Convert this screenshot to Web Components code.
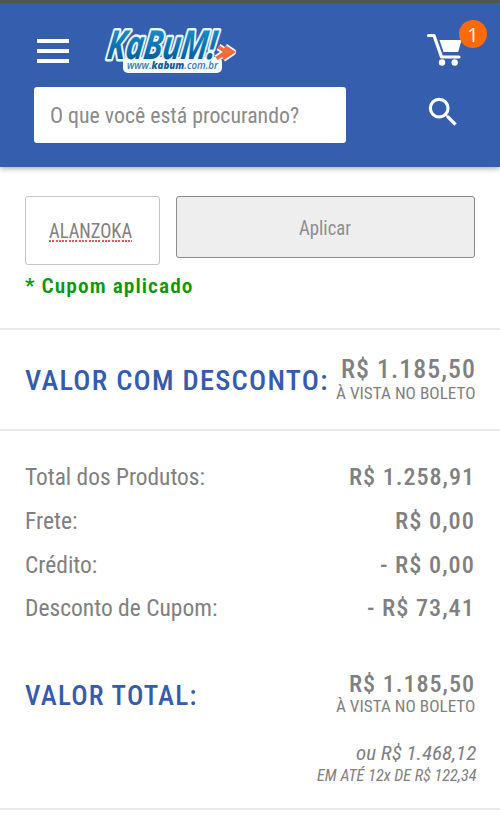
<!DOCTYPE html>
<html lang="pt-BR">
<head>
<meta charset="utf-8">
<title>KaBuM! - Carrinho</title>
<style>
html,body{margin:0;padding:0;background:#fff}
body{width:500px;height:830px;overflow:hidden;font-family:"Roboto Condensed",Roboto,sans-serif;font-stretch:condensed;color:#808080}
</style>
</head>
<body>
<cart-page></cart-page>
<script>
/* One line of text, condensed to the width given in "w". */
class FitText extends HTMLElement{
  connectedCallback(){
    const g=(n,d)=>this.getAttribute(n)||d;
    const ls=parseFloat(g('ls','0'));
    const r=this.attachShadow({mode:'open'});
    r.innerHTML=`<style>
      :host{display:block;flex:none;width:${g('w')}px;height:${g('h','24')}px;line-height:${g('h','24')}px;font-size:${g('size')}px;font-weight:${g('weight','400')};letter-spacing:${ls}px}
      span{display:inline-block;white-space:nowrap;transform-origin:0 50%}
    </style><span><slot></slot></span>`;
    const s=r.querySelector('span');
    s.style.transform=`scaleX(${parseFloat(g('w'))/(s.offsetWidth-ls)})`;
  }
}

class SiteLogo extends HTMLElement{
  constructor(){super();this.attachShadow({mode:'open'}).innerHTML=`<style>
    :host{display:block;width:136px;height:67px}
    svg{display:block;overflow:visible}
    text{font-family:"Open Sans","Noto Sans",sans-serif;font-style:italic;font-stretch:normal}
    .k{font-weight:700;font-size:40px;paint-order:stroke;stroke:#e9f7ff;stroke-width:5;stroke-linejoin:round;fill:url(#b)}
    .u{font-weight:600;font-size:10.5px;fill:#4478ad}
    </style>
    <svg width="136" height="67" viewBox="102 8 136 67">
      <defs><linearGradient id="b" x1="0" y1="0" x2="0" y2="1"><stop offset=".3" stop-color="#1689c4"/><stop offset=".8" stop-color="#075e9f"/></linearGradient></defs>
      <rect x="123" y="57" width="99" height="16" rx="5" fill="#f4fbff"/>
      <g transform="translate(106 58.500) skewX(-7)"><text class="k" x="0" y="0" textLength="109" lengthAdjust="spacingAndGlyphs">KaBuM!</text></g>
      <path d="M218.500 47L226 52 216.500 58.500M225 47L232.500 52 223 58.500" fill="none" stroke="#e9f7ff" stroke-width="7" stroke-linejoin="round"/>
      <path d="M218.500 47L226 52 216.500 58.500M225 47L232.500 52 223 58.500" fill="none" stroke="#f36a3b" stroke-width="3.800"/>
      <rect x="125" y="60.500" width="95" height="12" rx="4" fill="#f4fbff"/>
      <text class="u" x="127" y="69" textLength="91" lengthAdjust="spacingAndGlyphs">www.<tspan font-weight="800" fill="#1d5c9a">kabum</tspan>.com.br</text>
    </svg>`;}
}

class CartButton extends HTMLElement{
  constructor(){super();this.attachShadow({mode:'open'}).innerHTML=`<style>
    :host{display:block;position:relative;width:62px;height:50px}
    svg{display:block}
    .n{position:absolute;left:33.500px;top:0;width:28px;height:28px;border-radius:50%;background:#ff6a05;color:#fff;font:20px/29px "Open Sans",sans-serif;text-align:center}
    </style>
    <svg width="62" height="50" viewBox="426 20 62 50" fill="#fff">
      <path d="M428.500 35.500H434L441.500 57H459" fill="none" stroke="#fff" stroke-width="3.200" stroke-linejoin="round" stroke-linecap="round"/>
      <path d="M439.500 40H461.500L458.200 52H443.500Z"/>
      <circle cx="442" cy="62.500" r="3.200"/><circle cx="454.700" cy="62.500" r="3.200"/>
    </svg><div class="n"><slot></slot></div>`;}
}

class SiteHeader extends HTMLElement{
  constructor(){super();this.attachShadow({mode:'open'}).innerHTML=`<style>
    :host{display:block;box-sizing:border-box;height:167px;border-top:3px solid #55544f;background:#355eaf;box-shadow:0 1px 6px rgba(0,0,0,.4)}
    .top{display:flex;height:84px;box-sizing:border-box;padding:5px 12.500px 0 37px;align-items:flex-start}
    .menu{display:grid;gap:6px;width:32px;margin-top:31px}
    .menu i{height:4px;background:#fff}
    site-logo{margin-left:33px}
    cart-button{margin:12px 0 0 auto}
    .find{display:flex;padding-left:34px}
    .box{box-sizing:border-box;width:312px;height:56px;padding:16px 0 0 16px;background:#fff;border-radius:3px;color:#8a8a8a}
    .find svg{margin:6.200px 0 0 78.400px}
    </style>
    <div class="top"><div class="menu"><i></i><i></i><i></i></div><site-logo></site-logo><cart-button>1</cart-button></div>
    <div class="find"><div class="box"><fit-text w="249" size="22.5">O que você está procurando?</fit-text></div>
    <svg width="38.400" height="38.400" viewBox="0 0 24 24" fill="#fff"><path d="M15.500 14h-.79l-.28-.27A6.471 6.471 0 0 0 16 9.500 6.500 6.500 0 1 0 9.500 16c1.610 0 3.090-.59 4.230-1.570l.27.28v.79l5 4.990L20.490 19l-4.990-5zm-6 0C7.010 14 5 11.990 5 9.500S7.010 5 9.500 5 14 7.010 14 9.500 11.990 14 9.500 14z"/></svg></div>`;}
}

class CouponForm extends HTMLElement{
  constructor(){super();this.attachShadow({mode:'open'}).innerHTML=`<style>
    :host{display:block;box-sizing:border-box;height:161px;padding:29px 25px 0}
    .r{display:flex;gap:16px;align-items:flex-start}
    .f,.b{box-sizing:border-box;border-radius:3px}
    .f{width:135px;height:69px;border:1px solid #c4c4c4;padding:23px 0 0 22.500px}
    .u{display:block;width:83px;height:2px;margin-top:-4px;background:repeating-linear-gradient(90deg,#e05560 0 2px,transparent 2px 3.300px)}
    .b{display:flex;width:299px;height:62px;border:1px solid #8c8c8c;background:#eee;justify-content:center;padding-top:19px;color:#8d8d8d}
    .ok{display:block;color:#0b990b;margin-top:9px}
    </style>
    <div class="r"><div class="f"><fit-text w="83.5" size="19.5">ALANZOKA</fit-text><i class="u"></i></div>
    <div class="b"><fit-text w="52.5" size="20">Aplicar</fit-text></div></div>
    <fit-text class="ok" w="167" size="20.5" weight="600" ls="1">* Cupom aplicado</fit-text>`;}
}

/* A label on the left, one or more amounts stacked at the right. */
class SumRow extends HTMLElement{
  constructor(){super();this.attachShadow({mode:'open'}).innerHTML=`<style>
    :host{display:flex;align-items:flex-start;padding:0 25px}
    .v{display:flex;flex-direction:column;align-items:flex-end;margin-left:auto}
    </style><slot name="label"></slot><div class="v"><slot></slot></div>`;}
}

class CartPage extends HTMLElement{
  constructor(){super();this.attachShadow({mode:'open'}).innerHTML=`<style>
    :host{display:block}
    section{box-sizing:border-box;border-top:2px solid #e9e9e9}
    .a{height:101px;padding-top:27px}
    .c{height:381px;padding-top:35px;border-bottom:2px solid #e9e9e9}
    .t{color:#355bb0}
    .l{height:43.800px}
    .l fit-text{margin-top:-1px}
    .p{margin-right:1px}
    .e{font-style:italic}
    </style>
    <site-header></site-header><coupon-form></coupon-form>
    <section class="a"><sum-row><fit-text class="t" slot="label" w="302" h="47" size="27.500" weight="500" ls="1.2">VALOR COM DESCONTO:</fit-text>
      <fit-text class="p" w="133.5" h="25" size="25" weight="500" ls="1">R$ 1.185,50</fit-text><fit-text w="139.500" h="23" size="17.300">À VISTA NO BOLETO</fit-text></sum-row></section>
    <section class="c">
      <sum-row class="l"><fit-text slot="label" w="180" size="23.500">Total dos Produtos:</fit-text><fit-text class="p" w="125.500" size="24" weight="500" ls="1">R$ 1.258,91</fit-text></sum-row>
      <sum-row class="l"><fit-text slot="label" w="52" size="23.500">Frete:</fit-text><fit-text class="p" w="79" size="24" weight="500" ls="1">R$ 0,00</fit-text></sum-row>
      <sum-row class="l"><fit-text slot="label" w="72" size="23.500">Crédito:</fit-text><fit-text class="p" w="94" size="24" weight="500" ls="1">- R$ 0,00</fit-text></sum-row>
      <sum-row class="l"><fit-text slot="label" w="192" size="23.500">Desconto de Cupom:</fit-text><fit-text class="p" w="107" size="24" weight="500" ls="1">- R$ 73,41</fit-text></sum-row>
      <sum-row style="padding-top:31px"><fit-text class="t" slot="label" w="171" h="48" size="27" weight="500" ls="1.2">VALOR TOTAL:</fit-text>
        <fit-text class="p" w="125.500" size="24" h="24" weight="500" ls="1">R$ 1.185,50</fit-text><fit-text w="139.500" h="21" size="17">À VISTA NO BOLETO</fit-text></sum-row>
      <sum-row class="e" style="padding-top:21px;padding-right:24px"><fit-text w="120" size="21">ou R$ 1.468,12</fit-text><fit-text w="159" h="22" size="15.500">EM ATÉ 12x DE R$ 122,34</fit-text></sum-row>
    </section>`;}
}
customElements.define('fit-text',FitText);
customElements.define('site-logo',SiteLogo);
customElements.define('cart-button',CartButton);
customElements.define('site-header',SiteHeader);
customElements.define('coupon-form',CouponForm);
customElements.define('sum-row',SumRow);
customElements.define('cart-page',CartPage);
</script>
</body>
</html>
